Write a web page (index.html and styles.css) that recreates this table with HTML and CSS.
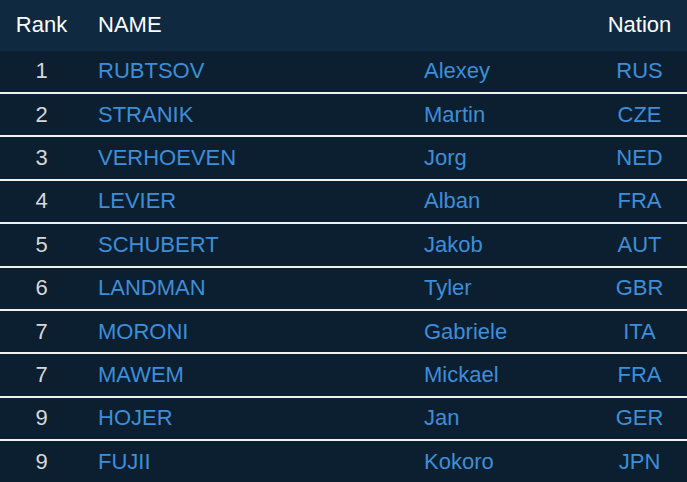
FILE: index.html
```html
<!DOCTYPE html>
<html>
<head>
<meta charset="utf-8">
<link rel="stylesheet" href="styles.css">
</head>
<body>
<div class="table">
  <div class="row head">
    <div class="rank">Rank</div>
    <div class="name">NAME</div>
    <div class="first"></div>
    <div class="nation">Nation</div>
  </div>
  <div class="row"><div class="rank">1</div><div class="name">RUBTSOV</div><div class="first">Alexey</div><div class="nation">RUS</div></div>
  <div class="row"><div class="rank">2</div><div class="name">STRANIK</div><div class="first">Martin</div><div class="nation">CZE</div></div>
  <div class="row"><div class="rank">3</div><div class="name">VERHOEVEN</div><div class="first">Jorg</div><div class="nation">NED</div></div>
  <div class="row"><div class="rank">4</div><div class="name">LEVIER</div><div class="first">Alban</div><div class="nation">FRA</div></div>
  <div class="row"><div class="rank">5</div><div class="name">SCHUBERT</div><div class="first">Jakob</div><div class="nation">AUT</div></div>
  <div class="row"><div class="rank">6</div><div class="name">LANDMAN</div><div class="first">Tyler</div><div class="nation">GBR</div></div>
  <div class="row"><div class="rank">7</div><div class="name">MORONI</div><div class="first">Gabriele</div><div class="nation">ITA</div></div>
  <div class="row"><div class="rank">7</div><div class="name">MAWEM</div><div class="first">Mickael</div><div class="nation">FRA</div></div>
  <div class="row"><div class="rank">9</div><div class="name">HOJER</div><div class="first">Jan</div><div class="nation">GER</div></div>
  <div class="row"><div class="rank">9</div><div class="name">FUJII</div><div class="first">Kokoro</div><div class="nation">JPN</div></div>
</div>
</body>
</html>
```
FILE: styles.css
```css
html, body {
  margin: 0;
  padding: 0;
  background: #0c1f30;
}
body {
  font-family: "Liberation Sans", Arial, sans-serif;
  font-size: 22px;
  width: 687px;
  height: 482px;
  overflow: hidden;
}
.table {
  display: flex;
  flex-direction: column;
}
.row {
  display: grid;
  grid-template-columns: 83px 341px 168px 95px;
  align-items: center;
  height: 41.4px;
  border-bottom: 2px solid #eef0f2;
  background: #0c1f30;
  color: #3e8ed8;
}
.row:last-child {
  border-bottom: none;
}
.row.head {
  height: 50.6px;
  border-bottom: none;
  background: #0f2940;
  color: #ffffff;
}
.rank {
  text-align: center;
  color: #d6d8da;
}
.head .rank {
  color: #ffffff;
}
.name {
  padding-left: 15px;
}
.nation {
  text-align: center;
}
```
